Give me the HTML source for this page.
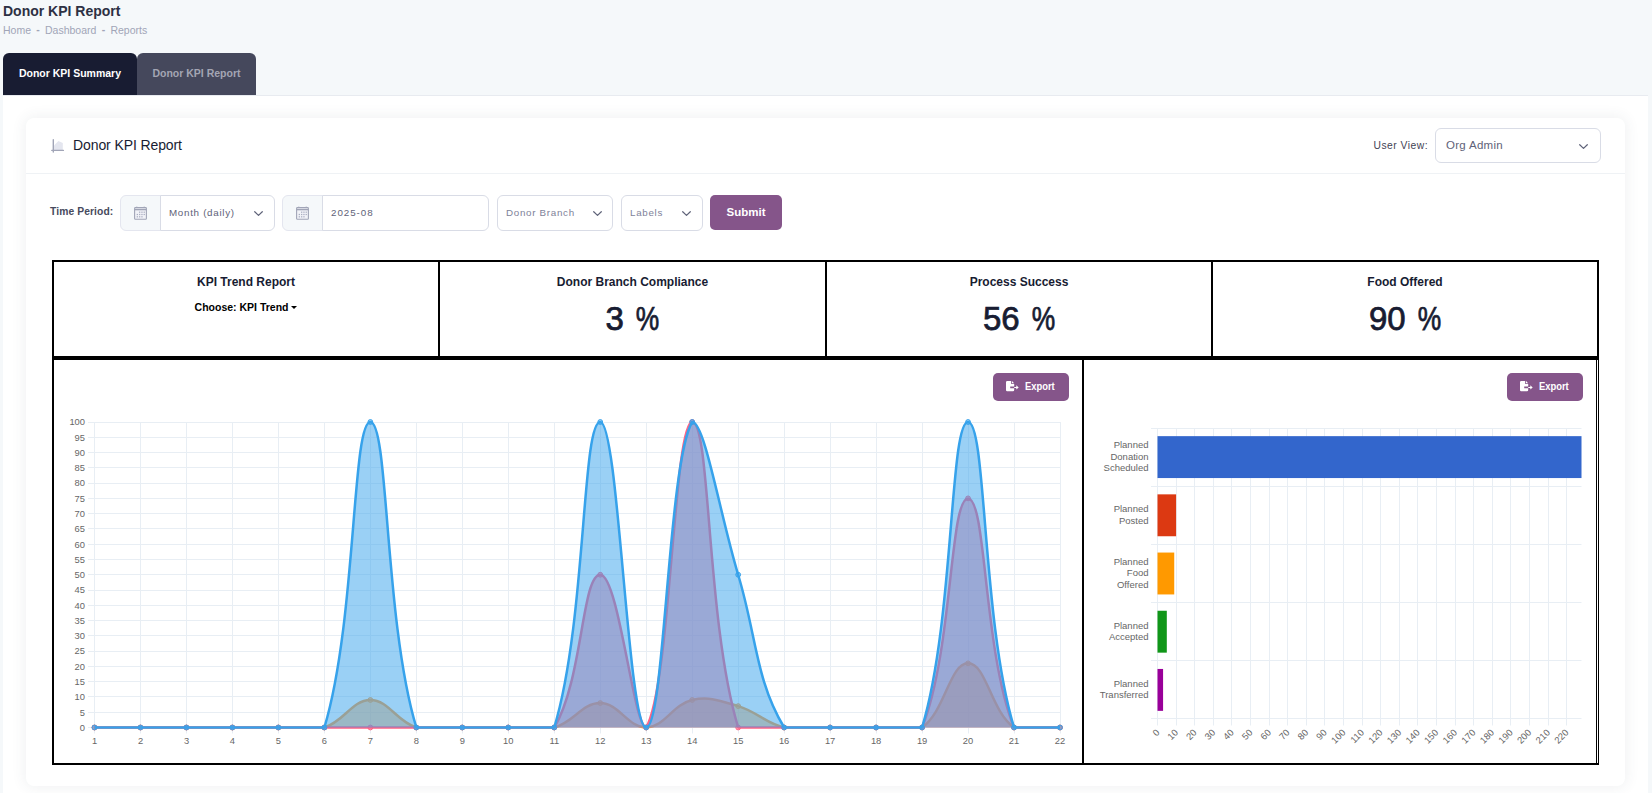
<!DOCTYPE html>
<html lang="en">
<head>
<meta charset="utf-8">
<title>Donor KPI Report</title>
<style>
*{box-sizing:border-box;margin:0;padding:0}
html,body{width:1652px;height:793px;overflow:hidden}
body{background:#f5f8fa;font-family:"Liberation Sans",sans-serif;color:#181c32;position:relative;font-size:13px}
.abs{position:absolute}
.ptitle{left:3px;top:2px;font-size:14px;font-weight:bold;color:#2d3043;line-height:18px;white-space:nowrap}
.crumb{left:3px;top:24px;font-size:10.5px;color:#a1a5b7;line-height:13px;white-space:nowrap;word-spacing:1px}
.sep{display:inline-block;position:relative;top:-1px;width:14px;text-align:center;font-weight:bold}
.tab{top:53px;height:42px;border-radius:6px 6px 0 0;font-size:10.5px;font-weight:bold;line-height:40px;text-align:center;white-space:nowrap}
.tab1{left:3px;width:134px;background:#181c32;color:#fff}
.tab2{left:137px;width:119px;background:#45485c;color:#a3a5b3}
.content{left:3px;top:95px;width:1645px;height:698px;background:#fff;border-top:1px solid #e8ebf0}
.card{left:26px;top:118px;width:1599px;height:668px;background:#fff;border-radius:8px;box-shadow:0 0 14px 2px rgba(60,70,90,0.07)}
.chead{left:26px;top:173px;width:1599px;height:1px;background:#eff2f5}
.ctitle{left:73px;top:136px;font-size:14px;line-height:18px;color:#181c32;white-space:nowrap;letter-spacing:-.1px}
.lbl{font-size:10.3px;font-weight:bold;color:#474a5d;letter-spacing:.1px;white-space:nowrap;line-height:14px}
.ctl{top:195px;height:36px;border:1px solid #d9dce6;border-radius:6px;background:#fff;font-size:9.8px;color:#5e6278;line-height:33px;white-space:nowrap;letter-spacing:.7px}
.addon{top:195px;height:36px;border:1px solid #e4e6ef;border-radius:6px 0 0 6px;background:#f5f8fa}
.btn{background:#85558a;color:#fff;font-weight:bold;border-radius:5px;text-align:center;white-space:nowrap}
.bk{background:#000}
.kl{font-size:12px;font-weight:bold;color:#181c32;text-align:center;white-space:nowrap;line-height:16px}
.pc{display:inline-block;transform:scaleX(.8);transform-origin:100% 50%}
.kv{font-size:33px;word-spacing:-3px;font-weight:normal;-webkit-text-stroke:.75px #181c32;color:#181c32;text-align:center;white-space:nowrap;line-height:36px}
svg text{font-family:"Liberation Sans",sans-serif}
</style>
</head>
<body>
<div class="abs ptitle">Donor KPI Report</div>
<div class="abs crumb">Home<span class="sep">-</span>Dashboard<span class="sep">-</span>Reports</div>

<div class="abs content"></div>
<div class="abs tab tab1">Donor KPI Summary</div>
<div class="abs tab tab2">Donor KPI Report</div>

<div class="abs card"></div>
<div class="abs chead"></div>
<div class="abs ctitle">Donor KPI Report</div>

<div class="abs lbl" style="left:1373.5px;top:139px;font-weight:normal;color:#3f4254;letter-spacing:.5px">User View:</div>
<div class="abs ctl" style="left:1435px;top:128px;width:166px;height:35px;padding-left:10px;font-size:11.5px;line-height:33px;letter-spacing:.3px">Org Admin</div>

<div class="abs lbl" style="left:50px;top:205px">Time Period:</div>
<div class="abs addon" style="left:120px;width:41px"></div>
<div class="abs ctl" style="left:160px;width:115px;border-radius:0 6px 6px 0;padding-left:8px">Month (daily)</div>
<div class="abs addon" style="left:282px;width:41px"></div>
<div class="abs ctl" style="left:322px;width:167px;border-radius:0 6px 6px 0;padding-left:8px;letter-spacing:.95px">2025-08</div>
<div class="abs ctl" style="left:497px;width:116px;padding-left:8px;color:#7e8299">Donor Branch</div>
<div class="abs ctl" style="left:621px;width:82px;padding-left:8px;color:#7e8299">Labels</div>
<div class="abs btn" style="left:710px;top:195px;width:72px;height:35px;line-height:34px;font-size:11.5px">Submit</div>

<!-- KPI table borders -->
<div class="abs bk" style="left:52px;top:260px;width:1547px;height:2px"></div>
<div class="abs bk" style="left:52px;top:356px;width:1547px;height:4px"></div>
<div class="abs bk" style="left:52px;top:260px;width:2px;height:505px"></div>
<div class="abs bk" style="left:438px;top:260px;width:2px;height:98px"></div>
<div class="abs bk" style="left:825px;top:260px;width:2px;height:98px"></div>
<div class="abs bk" style="left:1211px;top:260px;width:2px;height:98px"></div>
<div class="abs bk" style="left:1597px;top:260px;width:2px;height:98px"></div>
<div class="abs bk" style="left:1082px;top:358px;width:2px;height:407px"></div>
<div class="abs bk" style="left:1596px;top:358px;width:1px;height:407px"></div>
<div class="abs bk" style="left:1598px;top:358px;width:1px;height:407px"></div>
<div class="abs bk" style="left:52px;top:763px;width:1547px;height:2px"></div>

<div class="abs kl" style="left:54px;width:384px;top:274px">KPI Trend Report</div>
<div class="abs" style="left:54px;width:384px;top:300px;text-align:center;font-size:10.5px;font-weight:bold;color:#000;line-height:14px">Choose: KPI Trend <span style="display:inline-block;width:0;height:0;border-top:3.5px solid #000;border-left:3.2px solid transparent;border-right:3.2px solid transparent;vertical-align:2px;margin-left:0"></span></div>
<div class="abs kl" style="left:440px;width:385px;top:274px">Donor Branch Compliance</div>
<div class="abs kv" style="left:440px;width:385px;top:301px">3 <span class="pc">%</span></div>
<div class="abs kl" style="left:827px;width:384px;top:274px">Process Success</div>
<div class="abs kv" style="left:827px;width:384px;top:301px">56 <span class="pc">%</span></div>
<div class="abs kl" style="left:1213px;width:384px;top:274px">Food Offered</div>
<div class="abs kv" style="left:1213px;width:384px;top:301px">90 <span class="pc">%</span></div>

<div class="abs btn" style="left:993px;top:373px;width:76px;height:28px;line-height:27px;font-size:10px;padding-left:17px"><span style="display:inline-block;transform:scaleX(.94)">Export</span></div>
<div class="abs btn" style="left:1507px;top:373px;width:76px;height:28px;line-height:27px;font-size:10px;padding-left:17px"><span style="display:inline-block;transform:scaleX(.94)">Export</span></div>

<!--ICONS-->
<svg class="abs" style="left:50px;top:138px" width="16" height="16" viewBox="0 0 16 16"><path d="M4 12 V7.6 L8.4 3.1 L12.8 5 V12 Z" fill="#e4e6ef"/><path d="M3.3 1.8 V14 M1.8 12.4 H13.4" stroke="#a1a5b7" stroke-width="1.4" fill="none" stroke-linecap="round"/></svg>
<svg class="abs" style="left:134px;top:206px" width="13" height="14" viewBox="0 0 13 14"><rect x="0.6" y="1.6" width="11.8" height="11.6" rx="0.8" fill="#f1f2f7" stroke="#a1a5b7" stroke-width="1.1"/><path d="M0.6 3.6 H12.4" stroke="#a1a5b7" stroke-width="1.4"/><path d="M2.8 0.6 V2 M10.2 0.6 V2" stroke="#a1a5b7" stroke-width="1"/><g fill="#a9adc0"><rect x="5" y="5.6" width="1.3" height="1.2"/><rect x="7.3" y="5.6" width="1.3" height="1.2"/><rect x="9.6" y="5.6" width="1.3" height="1.2"/><rect x="2.7" y="7.9" width="1.3" height="1.2"/><rect x="5" y="7.9" width="1.3" height="1.2"/><rect x="7.3" y="7.9" width="1.3" height="1.2"/><rect x="9.6" y="7.9" width="1.3" height="1.2"/><rect x="2.7" y="10.2" width="1.3" height="1.2"/><rect x="5" y="10.2" width="1.3" height="1.2"/><rect x="7.3" y="10.2" width="1.3" height="1.2"/></g></svg>
<svg class="abs" style="left:296px;top:206px" width="13" height="14" viewBox="0 0 13 14"><rect x="0.6" y="1.6" width="11.8" height="11.6" rx="0.8" fill="#f1f2f7" stroke="#a1a5b7" stroke-width="1.1"/><path d="M0.6 3.6 H12.4" stroke="#a1a5b7" stroke-width="1.4"/><path d="M2.8 0.6 V2 M10.2 0.6 V2" stroke="#a1a5b7" stroke-width="1"/><g fill="#a9adc0"><rect x="5" y="5.6" width="1.3" height="1.2"/><rect x="7.3" y="5.6" width="1.3" height="1.2"/><rect x="9.6" y="5.6" width="1.3" height="1.2"/><rect x="2.7" y="7.9" width="1.3" height="1.2"/><rect x="5" y="7.9" width="1.3" height="1.2"/><rect x="7.3" y="7.9" width="1.3" height="1.2"/><rect x="9.6" y="7.9" width="1.3" height="1.2"/><rect x="2.7" y="10.2" width="1.3" height="1.2"/><rect x="5" y="10.2" width="1.3" height="1.2"/><rect x="7.3" y="10.2" width="1.3" height="1.2"/></g></svg>
<svg class="abs" style="left:254px;top:210.5px" width="9" height="6" viewBox="0 0 9 6"><path d="M0.7 0.7 L4.5 4.4 L8.3 0.7" fill="none" stroke="#5e6278" stroke-width="1.2" stroke-linecap="round" stroke-linejoin="round"/></svg>
<svg class="abs" style="left:593px;top:210.5px" width="9" height="6" viewBox="0 0 9 6"><path d="M0.7 0.7 L4.5 4.4 L8.3 0.7" fill="none" stroke="#5e6278" stroke-width="1.2" stroke-linecap="round" stroke-linejoin="round"/></svg>
<svg class="abs" style="left:682px;top:210.5px" width="9" height="6" viewBox="0 0 9 6"><path d="M0.7 0.7 L4.5 4.4 L8.3 0.7" fill="none" stroke="#5e6278" stroke-width="1.2" stroke-linecap="round" stroke-linejoin="round"/></svg>
<svg class="abs" style="left:1579px;top:143.5px" width="9" height="6" viewBox="0 0 9 6"><path d="M0.7 0.7 L4.5 4.4 L8.3 0.7" fill="none" stroke="#5e6278" stroke-width="1.2" stroke-linecap="round" stroke-linejoin="round"/></svg>
<svg class="abs" style="left:1006px;top:381px" width="13" height="11" viewBox="0 0 13 11"><path d="M0 1.2 Q0 0 1.2 0 H5.2 V3 H8.2 V5.6 H4.2 V7.2 H8.2 V9 Q8.2 10.2 7 10.2 H1.2 Q0 10.2 0 9 Z M6 0.1 L8.1 2.3 H6 Z" fill="#fff"/><path d="M8.2 5.9 H10.3 V4.3 L12.7 6.4 L10.3 8.5 V6.9 H8.2 Z" fill="#fff"/></svg>
<svg class="abs" style="left:1520px;top:381px" width="13" height="11" viewBox="0 0 13 11"><path d="M0 1.2 Q0 0 1.2 0 H5.2 V3 H8.2 V5.6 H4.2 V7.2 H8.2 V9 Q8.2 10.2 7 10.2 H1.2 Q0 10.2 0 9 Z M6 0.1 L8.1 2.3 H6 Z" fill="#fff"/><path d="M8.2 5.9 H10.3 V4.3 L12.7 6.4 L10.3 8.5 V6.9 H8.2 Z" fill="#fff"/></svg>
<!--/ICONS-->
<!--CHARTS-START-->
<svg class="abs" style="left:0;top:0" width="1652" height="793" viewBox="0 0 1652 793">
<g stroke="#e8eef4" stroke-width="1" fill="none"><path d="M88 727.5 H1060.5"/><path d="M88 712.5 H1060.5"/><path d="M88 696.5 H1060.5"/><path d="M88 681.5 H1060.5"/><path d="M88 666.5 H1060.5"/><path d="M88 651.5 H1060.5"/><path d="M88 635.5 H1060.5"/><path d="M88 620.5 H1060.5"/><path d="M88 605.5 H1060.5"/><path d="M88 590.5 H1060.5"/><path d="M88 574.5 H1060.5"/><path d="M88 559.5 H1060.5"/><path d="M88 544.5 H1060.5"/><path d="M88 528.5 H1060.5"/><path d="M88 513.5 H1060.5"/><path d="M88 498.5 H1060.5"/><path d="M88 483.5 H1060.5"/><path d="M88 467.5 H1060.5"/><path d="M88 452.5 H1060.5"/><path d="M88 437.5 H1060.5"/><path d="M88 422.5 H1060.5"/><path d="M94.5 422 V733.5"/><path d="M140.5 422 V733.5"/><path d="M186.5 422 V733.5"/><path d="M232.5 422 V733.5"/><path d="M278.5 422 V733.5"/><path d="M324.5 422 V733.5"/><path d="M370.5 422 V733.5"/><path d="M416.5 422 V733.5"/><path d="M462.5 422 V733.5"/><path d="M508.5 422 V733.5"/><path d="M554.5 422 V733.5"/><path d="M600.5 422 V733.5"/><path d="M646.5 422 V733.5"/><path d="M692.5 422 V733.5"/><path d="M738.5 422 V733.5"/><path d="M784.5 422 V733.5"/><path d="M830.5 422 V733.5"/><path d="M876.5 422 V733.5"/><path d="M922.5 422 V733.5"/><path d="M968.5 422 V733.5"/><path d="M1014.5 422 V733.5"/><path d="M1060.5 422 V733.5"/></g>
<g font-size="9.35" fill="#666"><text x="85" y="730.8" text-anchor="end">0</text><text x="85" y="715.5" text-anchor="end">5</text><text x="85" y="700.2" text-anchor="end">10</text><text x="85" y="685.0" text-anchor="end">15</text><text x="85" y="669.7" text-anchor="end">20</text><text x="85" y="654.4" text-anchor="end">25</text><text x="85" y="639.1" text-anchor="end">30</text><text x="85" y="623.9" text-anchor="end">35</text><text x="85" y="608.6" text-anchor="end">40</text><text x="85" y="593.3" text-anchor="end">45</text><text x="85" y="578.0" text-anchor="end">50</text><text x="85" y="562.8" text-anchor="end">55</text><text x="85" y="547.5" text-anchor="end">60</text><text x="85" y="532.2" text-anchor="end">65</text><text x="85" y="516.9" text-anchor="end">70</text><text x="85" y="501.7" text-anchor="end">75</text><text x="85" y="486.4" text-anchor="end">80</text><text x="85" y="471.1" text-anchor="end">85</text><text x="85" y="455.9" text-anchor="end">90</text><text x="85" y="440.6" text-anchor="end">95</text><text x="85" y="425.3" text-anchor="end">100</text><text x="94.5" y="743.5" text-anchor="middle">1</text><text x="140.5" y="743.5" text-anchor="middle">2</text><text x="186.5" y="743.5" text-anchor="middle">3</text><text x="232.4" y="743.5" text-anchor="middle">4</text><text x="278.4" y="743.5" text-anchor="middle">5</text><text x="324.4" y="743.5" text-anchor="middle">6</text><text x="370.4" y="743.5" text-anchor="middle">7</text><text x="416.3" y="743.5" text-anchor="middle">8</text><text x="462.3" y="743.5" text-anchor="middle">9</text><text x="508.3" y="743.5" text-anchor="middle">10</text><text x="554.3" y="743.5" text-anchor="middle">11</text><text x="600.2" y="743.5" text-anchor="middle">12</text><text x="646.2" y="743.5" text-anchor="middle">13</text><text x="692.2" y="743.5" text-anchor="middle">14</text><text x="738.2" y="743.5" text-anchor="middle">15</text><text x="784.1" y="743.5" text-anchor="middle">16</text><text x="830.1" y="743.5" text-anchor="middle">17</text><text x="876.1" y="743.5" text-anchor="middle">18</text><text x="922.1" y="743.5" text-anchor="middle">19</text><text x="968.0" y="743.5" text-anchor="middle">20</text><text x="1014.0" y="743.5" text-anchor="middle">21</text><text x="1060.0" y="743.5" text-anchor="middle">22</text></g>
<path d="M94.50 727.50 C112.89 727.50 122.09 727.50 140.48 727.50 C158.87 727.50 168.06 727.50 186.45 727.50 C204.84 727.50 214.04 727.50 232.43 727.50 C250.82 727.50 260.01 727.50 278.40 727.50 C296.80 727.50 307.39 727.50 324.38 727.50 C344.17 721.58 351.97 700.00 370.36 700.00 C388.75 700.00 396.54 721.58 416.33 727.50 C433.32 727.50 443.92 727.50 462.31 727.50 C480.70 727.50 489.90 727.50 508.29 727.50 C526.68 727.50 537.01 727.50 554.26 727.50 C573.80 722.31 581.85 703.06 600.24 703.06 C618.63 703.06 628.09 727.50 646.21 727.50 C664.87 726.88 672.48 704.59 692.19 700.00 C709.26 696.04 720.60 700.86 738.17 706.12 C757.38 711.86 764.85 723.01 784.14 727.50 C801.63 727.50 811.73 727.50 830.12 727.50 C848.51 727.50 857.70 727.50 876.10 727.50 C894.49 727.50 908.53 727.50 922.07 727.50 C945.31 711.28 949.66 663.35 968.05 663.35 C986.44 663.35 990.78 711.28 1014.02 727.50 C1027.56 727.50 1041.61 727.50 1060.00 727.50 L1060.00 727.50 L94.50 727.50 Z" fill="rgba(255,159,64,0.5)" stroke="none"/><path d="M94.50 727.50 C112.89 727.50 122.09 727.50 140.48 727.50 C158.87 727.50 168.06 727.50 186.45 727.50 C204.84 727.50 214.04 727.50 232.43 727.50 C250.82 727.50 260.01 727.50 278.40 727.50 C296.80 727.50 307.39 727.50 324.38 727.50 C344.17 721.58 351.97 700.00 370.36 700.00 C388.75 700.00 396.54 721.58 416.33 727.50 C433.32 727.50 443.92 727.50 462.31 727.50 C480.70 727.50 489.90 727.50 508.29 727.50 C526.68 727.50 537.01 727.50 554.26 727.50 C573.80 722.31 581.85 703.06 600.24 703.06 C618.63 703.06 628.09 727.50 646.21 727.50 C664.87 726.88 672.48 704.59 692.19 700.00 C709.26 696.04 720.60 700.86 738.17 706.12 C757.38 711.86 764.85 723.01 784.14 727.50 C801.63 727.50 811.73 727.50 830.12 727.50 C848.51 727.50 857.70 727.50 876.10 727.50 C894.49 727.50 908.53 727.50 922.07 727.50 C945.31 711.28 949.66 663.35 968.05 663.35 C986.44 663.35 990.78 711.28 1014.02 727.50 C1027.56 727.50 1041.61 727.50 1060.00 727.50" fill="none" stroke="rgb(255,159,64)" stroke-width="2.5" stroke-linejoin="round" stroke-linecap="butt"/><g fill="rgba(255,159,64,0.5)" stroke="rgb(255,159,64)" stroke-width="1"><circle cx="94.50" cy="727.50" r="2.4"/><circle cx="140.48" cy="727.50" r="2.4"/><circle cx="186.45" cy="727.50" r="2.4"/><circle cx="232.43" cy="727.50" r="2.4"/><circle cx="278.40" cy="727.50" r="2.4"/><circle cx="324.38" cy="727.50" r="2.4"/><circle cx="370.36" cy="700.00" r="2.4"/><circle cx="416.33" cy="727.50" r="2.4"/><circle cx="462.31" cy="727.50" r="2.4"/><circle cx="508.29" cy="727.50" r="2.4"/><circle cx="554.26" cy="727.50" r="2.4"/><circle cx="600.24" cy="703.06" r="2.4"/><circle cx="646.21" cy="727.50" r="2.4"/><circle cx="692.19" cy="700.00" r="2.4"/><circle cx="738.17" cy="706.12" r="2.4"/><circle cx="784.14" cy="727.50" r="2.4"/><circle cx="830.12" cy="727.50" r="2.4"/><circle cx="876.10" cy="727.50" r="2.4"/><circle cx="922.07" cy="727.50" r="2.4"/><circle cx="968.05" cy="663.35" r="2.4"/><circle cx="1014.02" cy="727.50" r="2.4"/><circle cx="1060.00" cy="727.50" r="2.4"/></g>
<path d="M94.50 727.50 C112.89 727.50 122.09 727.50 140.48 727.50 C158.87 727.50 168.06 727.50 186.45 727.50 C204.84 727.50 214.04 727.50 232.43 727.50 C250.82 727.50 260.01 727.50 278.40 727.50 C296.80 727.50 305.99 727.50 324.38 727.50 C342.77 727.50 351.97 727.50 370.36 727.50 C388.75 727.50 397.94 727.50 416.33 727.50 C434.72 727.50 443.92 727.50 462.31 727.50 C480.70 727.50 489.90 727.50 508.29 727.50 C526.68 727.50 546.03 727.50 554.26 727.50 C582.81 680.07 581.85 574.75 600.24 574.75 C618.63 574.75 633.69 727.50 646.21 727.50 C670.47 687.21 673.80 422.00 692.19 422.00 C710.58 422.00 706.15 621.13 738.17 727.50 C742.93 727.50 765.75 727.50 784.14 727.50 C802.53 727.50 811.73 727.50 830.12 727.50 C848.51 727.50 857.70 727.50 876.10 727.50 C894.49 727.50 916.02 727.50 922.07 727.50 C952.81 650.92 949.66 498.38 968.05 498.38 C986.44 498.38 983.29 650.92 1014.02 727.50 C1020.07 727.50 1041.61 727.50 1060.00 727.50 L1060.00 727.50 L94.50 727.50 Z" fill="rgba(255,99,132,0.5)" stroke="none"/><path d="M94.50 727.50 C112.89 727.50 122.09 727.50 140.48 727.50 C158.87 727.50 168.06 727.50 186.45 727.50 C204.84 727.50 214.04 727.50 232.43 727.50 C250.82 727.50 260.01 727.50 278.40 727.50 C296.80 727.50 305.99 727.50 324.38 727.50 C342.77 727.50 351.97 727.50 370.36 727.50 C388.75 727.50 397.94 727.50 416.33 727.50 C434.72 727.50 443.92 727.50 462.31 727.50 C480.70 727.50 489.90 727.50 508.29 727.50 C526.68 727.50 546.03 727.50 554.26 727.50 C582.81 680.07 581.85 574.75 600.24 574.75 C618.63 574.75 633.69 727.50 646.21 727.50 C670.47 687.21 673.80 422.00 692.19 422.00 C710.58 422.00 706.15 621.13 738.17 727.50 C742.93 727.50 765.75 727.50 784.14 727.50 C802.53 727.50 811.73 727.50 830.12 727.50 C848.51 727.50 857.70 727.50 876.10 727.50 C894.49 727.50 916.02 727.50 922.07 727.50 C952.81 650.92 949.66 498.38 968.05 498.38 C986.44 498.38 983.29 650.92 1014.02 727.50 C1020.07 727.50 1041.61 727.50 1060.00 727.50" fill="none" stroke="rgb(255,99,132)" stroke-width="2.5" stroke-linejoin="round" stroke-linecap="butt"/><g fill="rgba(255,99,132,0.5)" stroke="rgb(255,99,132)" stroke-width="1"><circle cx="94.50" cy="727.50" r="2.4"/><circle cx="140.48" cy="727.50" r="2.4"/><circle cx="186.45" cy="727.50" r="2.4"/><circle cx="232.43" cy="727.50" r="2.4"/><circle cx="278.40" cy="727.50" r="2.4"/><circle cx="324.38" cy="727.50" r="2.4"/><circle cx="370.36" cy="727.50" r="2.4"/><circle cx="416.33" cy="727.50" r="2.4"/><circle cx="462.31" cy="727.50" r="2.4"/><circle cx="508.29" cy="727.50" r="2.4"/><circle cx="554.26" cy="727.50" r="2.4"/><circle cx="600.24" cy="574.75" r="2.4"/><circle cx="646.21" cy="727.50" r="2.4"/><circle cx="692.19" cy="422.00" r="2.4"/><circle cx="738.17" cy="727.50" r="2.4"/><circle cx="784.14" cy="727.50" r="2.4"/><circle cx="830.12" cy="727.50" r="2.4"/><circle cx="876.10" cy="727.50" r="2.4"/><circle cx="922.07" cy="727.50" r="2.4"/><circle cx="968.05" cy="498.38" r="2.4"/><circle cx="1014.02" cy="727.50" r="2.4"/><circle cx="1060.00" cy="727.50" r="2.4"/></g>
<path d="M94.50 727.50 C112.89 727.50 122.09 727.50 140.48 727.50 C158.87 727.50 168.06 727.50 186.45 727.50 C204.84 727.50 214.04 727.50 232.43 727.50 C250.82 727.50 260.01 727.50 278.40 727.50 C296.80 727.50 319.62 727.50 324.38 727.50 C356.40 621.13 351.97 422.00 370.36 422.00 C388.75 422.00 384.32 621.13 416.33 727.50 C421.10 727.50 443.92 727.50 462.31 727.50 C480.70 727.50 489.90 727.50 508.29 727.50 C526.68 727.50 549.50 727.50 554.26 727.50 C586.28 621.13 581.85 422.00 600.24 422.00 C618.63 422.00 627.82 727.50 646.21 727.50 C664.60 727.50 667.93 462.29 692.19 422.00 C704.72 422.00 719.78 513.65 738.17 574.75 C756.56 635.85 755.59 680.07 784.14 727.50 C792.37 727.50 811.73 727.50 830.12 727.50 C848.51 727.50 857.70 727.50 876.10 727.50 C894.49 727.50 917.31 727.50 922.07 727.50 C954.09 621.13 949.66 422.00 968.05 422.00 C986.44 422.00 982.01 621.13 1014.02 727.50 C1018.79 727.50 1041.61 727.50 1060.00 727.50 L1060.00 727.50 L94.50 727.50 Z" fill="rgba(54,162,235,0.5)" stroke="none"/><path d="M94.50 727.50 C112.89 727.50 122.09 727.50 140.48 727.50 C158.87 727.50 168.06 727.50 186.45 727.50 C204.84 727.50 214.04 727.50 232.43 727.50 C250.82 727.50 260.01 727.50 278.40 727.50 C296.80 727.50 319.62 727.50 324.38 727.50 C356.40 621.13 351.97 422.00 370.36 422.00 C388.75 422.00 384.32 621.13 416.33 727.50 C421.10 727.50 443.92 727.50 462.31 727.50 C480.70 727.50 489.90 727.50 508.29 727.50 C526.68 727.50 549.50 727.50 554.26 727.50 C586.28 621.13 581.85 422.00 600.24 422.00 C618.63 422.00 627.82 727.50 646.21 727.50 C664.60 727.50 667.93 462.29 692.19 422.00 C704.72 422.00 719.78 513.65 738.17 574.75 C756.56 635.85 755.59 680.07 784.14 727.50 C792.37 727.50 811.73 727.50 830.12 727.50 C848.51 727.50 857.70 727.50 876.10 727.50 C894.49 727.50 917.31 727.50 922.07 727.50 C954.09 621.13 949.66 422.00 968.05 422.00 C986.44 422.00 982.01 621.13 1014.02 727.50 C1018.79 727.50 1041.61 727.50 1060.00 727.50" fill="none" stroke="rgb(54,162,235)" stroke-width="2.5" stroke-linejoin="round" stroke-linecap="butt"/><g fill="rgba(54,162,235,0.5)" stroke="rgb(54,162,235)" stroke-width="1"><circle cx="94.50" cy="727.50" r="2.4"/><circle cx="140.48" cy="727.50" r="2.4"/><circle cx="186.45" cy="727.50" r="2.4"/><circle cx="232.43" cy="727.50" r="2.4"/><circle cx="278.40" cy="727.50" r="2.4"/><circle cx="324.38" cy="727.50" r="2.4"/><circle cx="370.36" cy="422.00" r="2.4"/><circle cx="416.33" cy="727.50" r="2.4"/><circle cx="462.31" cy="727.50" r="2.4"/><circle cx="508.29" cy="727.50" r="2.4"/><circle cx="554.26" cy="727.50" r="2.4"/><circle cx="600.24" cy="422.00" r="2.4"/><circle cx="646.21" cy="727.50" r="2.4"/><circle cx="692.19" cy="422.00" r="2.4"/><circle cx="738.17" cy="574.75" r="2.4"/><circle cx="784.14" cy="727.50" r="2.4"/><circle cx="830.12" cy="727.50" r="2.4"/><circle cx="876.10" cy="727.50" r="2.4"/><circle cx="922.07" cy="727.50" r="2.4"/><circle cx="968.05" cy="422.00" r="2.4"/><circle cx="1014.02" cy="727.50" r="2.4"/><circle cx="1060.00" cy="727.50" r="2.4"/></g>
<g stroke="#e8eef4" stroke-width="1" fill="none"><path d="M1157.5 428.0 V725.5"/><path d="M1176.5 428.0 V725.5"/><path d="M1194.5 428.0 V725.5"/><path d="M1213.5 428.0 V725.5"/><path d="M1231.5 428.0 V725.5"/><path d="M1250.5 428.0 V725.5"/><path d="M1269.5 428.0 V725.5"/><path d="M1287.5 428.0 V725.5"/><path d="M1306.5 428.0 V725.5"/><path d="M1324.5 428.0 V725.5"/><path d="M1343.5 428.0 V725.5"/><path d="M1362.5 428.0 V725.5"/><path d="M1380.5 428.0 V725.5"/><path d="M1399.5 428.0 V725.5"/><path d="M1417.5 428.0 V725.5"/><path d="M1436.5 428.0 V725.5"/><path d="M1455.5 428.0 V725.5"/><path d="M1473.5 428.0 V725.5"/><path d="M1492.5 428.0 V725.5"/><path d="M1510.5 428.0 V725.5"/><path d="M1529.5 428.0 V725.5"/><path d="M1548.5 428.0 V725.5"/><path d="M1566.5 428.0 V725.5"/><path d="M1151 428.5 H1581.5"/><path d="M1151 486.5 H1581.5"/><path d="M1151 544.5 H1581.5"/><path d="M1151 602.5 H1581.5"/><path d="M1151 660.5 H1581.5"/><path d="M1151 718.5 H1581.5"/></g>
<rect x="1157.5" y="436.15" width="424.00" height="41.90" fill="#3366cc"/>
<text x="1148.5" y="448.2" text-anchor="end" font-size="9.5" fill="#666">Planned</text>
<text x="1148.5" y="459.8" text-anchor="end" font-size="9.5" fill="#666">Donation</text>
<text x="1148.5" y="471.4" text-anchor="end" font-size="9.5" fill="#666">Scheduled</text>
<rect x="1157.5" y="494.35" width="18.60" height="41.90" fill="#dc3912"/>
<text x="1148.5" y="512.2" text-anchor="end" font-size="9.5" fill="#666">Planned</text>
<text x="1148.5" y="523.8" text-anchor="end" font-size="9.5" fill="#666">Posted</text>
<rect x="1157.5" y="552.55" width="16.74" height="41.90" fill="#ff9900"/>
<text x="1148.5" y="564.6" text-anchor="end" font-size="9.5" fill="#666">Planned</text>
<text x="1148.5" y="576.2" text-anchor="end" font-size="9.5" fill="#666">Food</text>
<text x="1148.5" y="587.8" text-anchor="end" font-size="9.5" fill="#666">Offered</text>
<rect x="1157.5" y="610.75" width="9.30" height="41.90" fill="#109618"/>
<text x="1148.5" y="628.6" text-anchor="end" font-size="9.5" fill="#666">Planned</text>
<text x="1148.5" y="640.2" text-anchor="end" font-size="9.5" fill="#666">Accepted</text>
<rect x="1157.5" y="668.95" width="5.58" height="41.90" fill="#990099"/>
<text x="1148.5" y="686.8" text-anchor="end" font-size="9.5" fill="#666">Planned</text>
<text x="1148.5" y="698.4" text-anchor="end" font-size="9.5" fill="#666">Transferred</text>
<text transform="translate(1157.7,730.8) rotate(-45)" text-anchor="end" font-size="9.35" fill="#666" dy="3.35">0</text>
<text transform="translate(1176.3,730.8) rotate(-45)" text-anchor="end" font-size="9.35" fill="#666" dy="3.35">10</text>
<text transform="translate(1194.9,730.8) rotate(-45)" text-anchor="end" font-size="9.35" fill="#666" dy="3.35">20</text>
<text transform="translate(1213.5,730.8) rotate(-45)" text-anchor="end" font-size="9.35" fill="#666" dy="3.35">30</text>
<text transform="translate(1232.1,730.8) rotate(-45)" text-anchor="end" font-size="9.35" fill="#666" dy="3.35">40</text>
<text transform="translate(1250.7,730.8) rotate(-45)" text-anchor="end" font-size="9.35" fill="#666" dy="3.35">50</text>
<text transform="translate(1269.3,730.8) rotate(-45)" text-anchor="end" font-size="9.35" fill="#666" dy="3.35">60</text>
<text transform="translate(1287.9,730.8) rotate(-45)" text-anchor="end" font-size="9.35" fill="#666" dy="3.35">70</text>
<text transform="translate(1306.5,730.8) rotate(-45)" text-anchor="end" font-size="9.35" fill="#666" dy="3.35">80</text>
<text transform="translate(1325.1,730.8) rotate(-45)" text-anchor="end" font-size="9.35" fill="#666" dy="3.35">90</text>
<text transform="translate(1343.7,730.8) rotate(-45)" text-anchor="end" font-size="9.35" fill="#666" dy="3.35">100</text>
<text transform="translate(1362.3,730.8) rotate(-45)" text-anchor="end" font-size="9.35" fill="#666" dy="3.35">110</text>
<text transform="translate(1380.9,730.8) rotate(-45)" text-anchor="end" font-size="9.35" fill="#666" dy="3.35">120</text>
<text transform="translate(1399.5,730.8) rotate(-45)" text-anchor="end" font-size="9.35" fill="#666" dy="3.35">130</text>
<text transform="translate(1418.1,730.8) rotate(-45)" text-anchor="end" font-size="9.35" fill="#666" dy="3.35">140</text>
<text transform="translate(1436.6,730.8) rotate(-45)" text-anchor="end" font-size="9.35" fill="#666" dy="3.35">150</text>
<text transform="translate(1455.2,730.8) rotate(-45)" text-anchor="end" font-size="9.35" fill="#666" dy="3.35">160</text>
<text transform="translate(1473.8,730.8) rotate(-45)" text-anchor="end" font-size="9.35" fill="#666" dy="3.35">170</text>
<text transform="translate(1492.4,730.8) rotate(-45)" text-anchor="end" font-size="9.35" fill="#666" dy="3.35">180</text>
<text transform="translate(1511.0,730.8) rotate(-45)" text-anchor="end" font-size="9.35" fill="#666" dy="3.35">190</text>
<text transform="translate(1529.6,730.8) rotate(-45)" text-anchor="end" font-size="9.35" fill="#666" dy="3.35">200</text>
<text transform="translate(1548.2,730.8) rotate(-45)" text-anchor="end" font-size="9.35" fill="#666" dy="3.35">210</text>
<text transform="translate(1566.8,730.8) rotate(-45)" text-anchor="end" font-size="9.35" fill="#666" dy="3.35">220</text>
</svg>
<!--CHARTS-END-->
</body>
</html>
